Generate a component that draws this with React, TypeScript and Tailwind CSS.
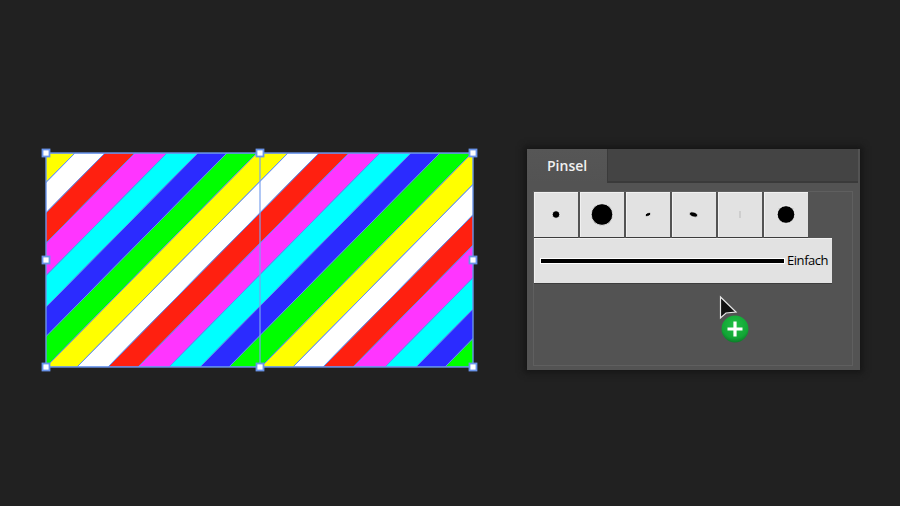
const stripeColors = ['#ffff00', '#ffffff', '#ff2010', '#ff35ff', '#00ffff', '#2b2bff', '#00ff00'];

// x position on the top edge where each colour ends, relative to the artwork's left
const stops = [29, 59, 89, 121, 152, 181, 211, 242, 273, 303, 334, 365, 394, 426, 458, 488, 518, 550, 581, 610, 640];
const slant = 211;

const Artwork = () => {
  const polys = stops.map((stop, i) => {
    const prev = i === 0 ? -1 : stops[i - 1];
    const points = `${46 + prev},153 ${46 + stop},153 ${46 + stop - slant},367 ${46 + prev - slant},367`;
    return <polygon key={i} points={points} fill={stripeColors[i % 7]} stroke="#5f90f2" strokeWidth="1" />;
  });
  const handles = [
    [46, 153], [260, 153], [473, 153],
    [46, 260], [473, 260],
    [46, 367], [260, 367], [473, 367],
  ];
  return (
    <svg className="block shrink-0" width="481" height="506" viewBox="0 0 481 506">
      <defs>
        <clipPath id="art">
          <rect x="46" y="153" width="427" height="214" />
        </clipPath>
      </defs>
      <g clipPath="url(#art)">{polys}</g>
      <rect x="46" y="153" width="427" height="214" fill="none" stroke="#6a94ea" strokeWidth="1.4" />
      <line x1="260" y1="153" x2="260" y2="367" stroke="#7ba2ee" strokeWidth="1.2" />
      {handles.map(([x, y]) => (
        <rect key={`${x}-${y}`} x={x - 3.5} y={y - 3.5} width="7" height="7" fill="#ffffff" stroke="#6a94ea" strokeWidth="1.8" />
      ))}
    </svg>
  );
};

const Tip = ({ children }: { children: React.ReactNode }) => (
  <div className="w-[44px] h-[45px] bg-[#e2e2e2] border-t border-l border-[#f1f1f1] shadow-[0_1px_0_#3d3d3d]">
    <svg width="44" height="45" viewBox="0 0 44 45" className="block -mt-px -ml-px">
      {children}
    </svg>
  </div>
);

const BrushTips = () => (
  <div className="flex gap-[2px]">
    <Tip>
      <circle cx="22" cy="22.5" r="3.8" fill="#000" stroke="#fff" strokeWidth="0.8" />
    </Tip>
    <Tip>
      <circle cx="22" cy="22.5" r="10.8" fill="#000" stroke="#fff" strokeWidth="0.8" />
    </Tip>
    <Tip>
      <ellipse cx="22" cy="22.5" rx="2.8" ry="1.7" transform="rotate(-22 22 22.5)" fill="#000" stroke="#fff" strokeWidth="0.6" />
    </Tip>
    <Tip>
      <ellipse cx="21.5" cy="22.5" rx="4.2" ry="2.4" transform="rotate(16 21.5 22.5)" fill="#000" stroke="#fff" strokeWidth="0.6" />
    </Tip>
    <Tip>
      <rect x="21.5" y="19" width="1" height="7" fill="#b9b9b9" />
    </Tip>
    <Tip>
      <circle cx="22" cy="22.5" r="8.8" fill="#000" stroke="#fff" strokeWidth="0.8" />
    </Tip>
  </div>
);

const DragCursor = () => (
  <svg className="absolute left-[191px] top-[146px]" width="32" height="50" viewBox="0 0 32 50">
    <defs>
      <radialGradient id="plusGreen" cx="50%" cy="35%" r="70%">
        <stop offset="0%" stopColor="#20c045" />
        <stop offset="70%" stopColor="#12a535" />
        <stop offset="100%" stopColor="#0a6e25" />
      </radialGradient>
    </defs>
    <path d="M2.5 2 L2.5 23 L8 18 L18 17 Z" fill="#111" stroke="#e8e8e8" strokeWidth="1.2" />
    <circle cx="17" cy="34" r="13.5" fill="url(#plusGreen)" />
    <path d="M17 26.5 V41.5 M9.5 34 H24.5" stroke="#fff" strokeWidth="3.2" />
  </svg>
);

const BrushPanel = () => (
  <div className="relative w-[333px] h-[221px] mt-[149px] bg-[#535353] shadow-[0_0_6px_3px_#161616] flex flex-col font-['Open_Sans','Noto_Sans',sans-serif]">
    <div className="flex h-[34px] shrink-0 pr-[2px]">
      <div className="w-[80px] flex items-center pl-[20px] pb-[2px] text-[14px] font-semibold text-[#f0f0f0] bg-gradient-to-b from-[#565656] to-[#535353]">
        Pinsel
      </div>
      <div className="flex-1 bg-[#444444] border-l border-b-2 border-[#3a3a3a]" />
    </div>
    <div className="mt-[8px] ml-[6px] mr-[7px] h-[175px] border border-[#5f5f5f]">
      <BrushTips />
      <div className="mt-[1px] w-[298px] h-[45px] bg-[#e2e2e2] border-l border-t border-[#f1f1f1] shadow-[0_1px_0_#3d3d3d] flex items-center pl-[6px]">
        <div className="w-[243px] h-[4px] bg-black shadow-[0_0_0_1px_#fff] shrink-0" />
        <span className="ml-[3px] -mt-[2px] text-[13px] leading-none tracking-[-0.45px] text-black">Einfach</span>
      </div>
    </div>
    <DragCursor />
  </div>
);

export default function App() {
  return (
    <div className="flex w-[900px] h-[506px] overflow-hidden bg-[#212121]">
      <Artwork />
      <div className="ml-[46px]">
        <BrushPanel />
      </div>
    </div>
  );
}
